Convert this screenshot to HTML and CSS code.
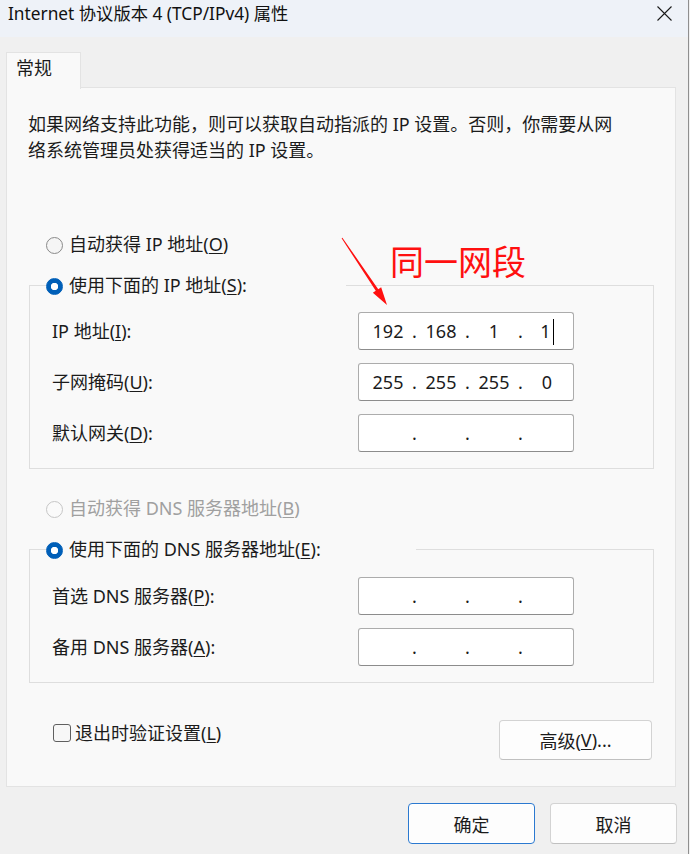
FILE: index.html
```html
<!DOCTYPE html>
<html lang="zh-CN">
<head>
<meta charset="utf-8">
<title>Internet 协议版本 4 (TCP/IPv4) 属性</title>
<link rel="stylesheet" href="styles.css">
</head>
<body>
<div class="window">
  <div class="titlebar">
    <span class="title">Internet 协议版本 4 (TCP/IPv4) 属性</span>
    <svg class="close" width="15" height="15" viewBox="0 0 15 15"><path d="M0.5 0.5L14.5 14.5M14.5 0.5L0.5 14.5" stroke="#1a1a1a" stroke-width="1.1" fill="none"/></svg>
  </div>
  <div class="tabs"><div class="tab">常规</div></div>
  <div class="panel">
    <p class="desc">如果网络支持此功能，则可以获取自动指派的 IP 设置。否则，你需要从网<br>络系统管理员处获得适当的 IP 设置。</p>

    <div class="opt opt-first"><span class="radio"></span><span>自动获得 IP 地址(<u>O</u>)</span></div>

    <fieldset class="group group-ip">
      <legend class="legend legend-ip"><div class="opt"><span class="radio on"></span><span>使用下面的 IP 地址(<u>S</u>):</span></div></legend>
      <div class="fields">
        <span class="lbl">IP 地址(<u>I</u>):</span>
        <div class="ip"><span class="seg">192</span><span class="dot">.</span><span class="seg">168</span><span class="dot">.</span><span class="seg">1</span><span class="dot">.</span><span class="seg">1<span class="caret"></span></span></div>
        <span class="lbl">子网掩码(<u>U</u>):</span>
        <div class="ip"><span class="seg">255</span><span class="dot">.</span><span class="seg">255</span><span class="dot">.</span><span class="seg">255</span><span class="dot">.</span><span class="seg">0</span></div>
        <span class="lbl">默认网关(<u>D</u>):</span>
        <div class="ip"><span class="seg"></span><span class="dot">.</span><span class="seg"></span><span class="dot">.</span><span class="seg"></span><span class="dot">.</span><span class="seg"></span></div>
      </div>
    </fieldset>

    <div class="opt opt-dns-auto"><span class="radio dis"></span><span>自动获得 DNS 服务器地址(<u>B</u>)</span></div>

    <fieldset class="group group-dns">
      <legend class="legend legend-dns"><div class="opt"><span class="radio on"></span><span>使用下面的 DNS 服务器地址(<u>E</u>):</span></div></legend>
      <div class="fields">
        <span class="lbl">首选 DNS 服务器(<u>P</u>):</span>
        <div class="ip"><span class="seg"></span><span class="dot">.</span><span class="seg"></span><span class="dot">.</span><span class="seg"></span><span class="dot">.</span><span class="seg"></span></div>
        <span class="lbl">备用 DNS 服务器(<u>A</u>):</span>
        <div class="ip"><span class="seg"></span><span class="dot">.</span><span class="seg"></span><span class="dot">.</span><span class="seg"></span><span class="dot">.</span><span class="seg"></span></div>
      </div>
    </fieldset>

    <div class="bottom">
      <div class="check"><span class="box"></span><span>退出时验证设置(<u>L</u>)</span></div>
      <div class="btn btn-adv">高级(<u>V</u>)...</div>
    </div>
  </div>
  <div class="footer">
    <div class="btn btn-main btn-ok">确定</div>
    <div class="btn btn-main">取消</div>
  </div>
</div>

<div class="note">同一网段</div>
<svg class="arrow" width="60" height="80" viewBox="0 0 60 80"><polygon points="6.6,8.3 40.75,60.84 37.85,62.8 52,75 46.15,57.2 43.25,59.16 7.4,7.7" fill="#ff1010"/></svg>
</body>
</html>
```

FILE: styles.css
```css
html, body {
  margin: 0;
  padding: 0;
  background: #f0f0f0;
}
body {
  width: 690px;
  height: 854px;
  position: relative;
  overflow: hidden;
  font-family: "Noto Sans", "Noto Sans CJK SC", sans-serif;
  font-size: 18px;
  color: #1b1b1b;
}
u { text-decoration-thickness: 1px; text-underline-offset: 2px; }

.window {
  width: 689px;
  height: 854px;
  box-sizing: border-box;
  border-right: 1px solid #8f8f8f;
  background: #f0f0f0;
}

.titlebar {
  height: 37px;
  background: #eef2f8;
  display: flex;
  justify-content: space-between;
  align-items: flex-start;
}
.title {
  margin: 1px 0 0 8px;
  line-height: 26px;
  font-size: 17.3px;
  color: #111;
}
.close {
  margin: 6px 16px 0 0;
}

.tabs {
  padding: 15px 0 0 6px;
  height: 36px;
  position: relative;
  z-index: 1;
  margin-bottom: -1px;
}
.tab {
  width: 75px;
  height: 37px;
  box-sizing: border-box;
  border: 1px solid #e3e3e3;
  border-bottom: none;
  background: #f9f9f9;
  padding-left: 9px;
  line-height: 30px;
}

.panel {
  margin-left: 6px;
  width: 670px;
  height: 700px;
  box-sizing: border-box;
  border: 1px solid #e3e3e3;
  background: #f9f9f9;
}

.desc {
  margin: 23px 0 0 21px;
  line-height: 26px;
}

.opt {
  display: flex;
  align-items: center;
  gap: 6px;
  height: 26px;
  line-height: 26px;
  white-space: nowrap;
}
.opt-first { margin: 68px 0 0 39px; }
.opt-dns-auto { margin: 26px 0 0 39px; color: #a0a0a0; }

.radio {
  flex: none;
  width: 17px;
  height: 17px;
  box-sizing: border-box;
  border-radius: 50%;
  border: 1px solid #8a8a8a;
  background: #f5f5f5;
  margin-top: 2px;
}
.radio.on {
  border-color: #005fb8;
  background: radial-gradient(circle, #ffffff 0 3.4px, #005fb8 4px);
}
.radio.dis {
  border-color: #c6c6c6;
  background: #fafafa;
}

.group {
  margin: 15px 0 0 22px;
  width: 625px;
  min-width: 0;
  box-sizing: border-box;
  border: 1px solid #dedede;
  padding: 14px 0 16px 0;
}
.group-dns { padding-top: 15px; }
.legend {
  margin-left: 16px;
  padding: 0;
  box-sizing: border-box;
}
.legend-ip { width: 300px; }
.legend-dns { width: 370px; }

.fields {
  display: grid;
  grid-template-columns: 306px 216px;
  row-gap: 13px;
  margin-left: 22px;
  align-items: center;
}
.lbl { line-height: 26px; white-space: nowrap; }

.ip {
  height: 38px;
  box-sizing: border-box;
  border: 1px solid #acacac;
  border-bottom-color: #8c8c8c;
  border-radius: 3px;
  background: #ffffff;
  display: flex;
  align-items: center;
  padding-left: 6px;
  line-height: 26px;
}
.seg { width: 46px; text-align: center; white-space: nowrap; }
.dot { width: 7px; text-align: center; }
.caret {
  display: inline-block;
  width: 1px;
  height: 26px;
  background: #000;
  margin-left: 2px;
  vertical-align: -7px;
}

.bottom {
  margin: 37px 0 0 46px;
  width: 599px;
  display: flex;
  justify-content: space-between;
  align-items: flex-start;
}
.check {
  display: flex;
  align-items: center;
  gap: 4px;
  line-height: 26px;
}
.box {
  width: 18px;
  height: 18px;
  box-sizing: border-box;
  border: 1px solid #5f5f5f;
  border-radius: 3px;
  background: #f7f7f7;
}

.btn {
  box-sizing: border-box;
  border: 1px solid #d3d3d3;
  border-bottom-color: #c0c0c0;
  border-radius: 4px;
  background: #fdfdfd;
  display: flex;
  align-items: center;
  justify-content: center;
}
.btn-adv { width: 153px; height: 40px; }

.footer {
  display: flex;
  justify-content: flex-end;
  gap: 15px;
  padding: 16px 11px 0 0;
}
.btn-main { width: 127px; height: 41px; }
.btn-ok {
  border: 1px solid #2b79d0;
  box-shadow: inset 0 0 0 1px #ffffff;
}

.note {
  position: absolute;
  left: 390px;
  top: 244px;
  font-family: "Noto Sans CJK SC", sans-serif;
  font-size: 34px;
  line-height: 34px;
  color: #ff1010;
  white-space: nowrap;
}
.arrow {
  position: absolute;
  left: 335px;
  top: 230px;
}
```
